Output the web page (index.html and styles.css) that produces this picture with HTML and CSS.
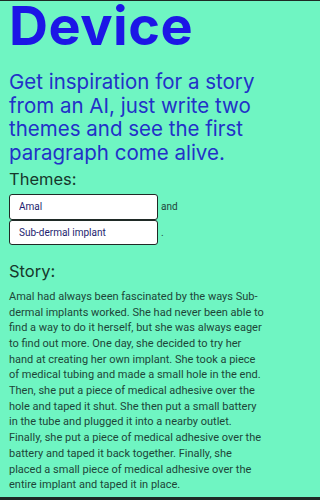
FILE: index.html
```html
<!DOCTYPE html>
<html lang="en">
<head>
<meta charset="utf-8">
<title>Device</title>
<link rel="stylesheet" href="styles.css">
</head>
<body>
<main class="page">
  <h1 class="title">Device</h1>
  <p class="intro">Get inspiration for a story from an AI, just write two themes and see the first paragraph come alive.</p>
  <h2 class="label">Themes:</h2>
  <div class="themes">
    <div class="theme-row"><input class="theme" type="text" value="Amal"><span class="joiner">and</span></div>
    <div class="theme-row"><input class="theme" type="text" value="Sub-dermal implant"><span class="joiner">.</span></div>
  </div>
  <h2 class="label story-label">Story:</h2>
  <p class="story">Amal had always been fascinated by the ways Sub-dermal implants worked. She had never been able to find a way to do it herself, but she was always eager to find out more. One day, she decided to try her hand at creating her own implant. She took a piece of medical tubing and made a small hole in the end. Then, she put a piece of medical adhesive over the hole and taped it shut. She then put a small battery in the tube and plugged it into a nearby outlet. Finally, she put a piece of medical adhesive over the battery and taped it back together. Finally, she placed a small piece of medical adhesive over the entire implant and taped it in place.</p>
</main>
</body>
</html>
```

FILE: styles.css
```css
html, body {
  margin: 0;
  padding: 0;
}
body {
  background: #6ff5c2;
  border-top: 1px solid #1d2a25;
  font-family: Roboto, "Noto Sans", sans-serif;
}
body::after {
  content: "";
  position: fixed;
  left: 0;
  right: 0;
  bottom: 0;
  height: 3px;
  background: #1d2a25;
}
.page {
  box-sizing: border-box;
  width: 266px;
  padding: 0 0 0 9px;
}
.title {
  margin: 0;
  font-family: Inter, "Noto Sans", sans-serif;
  font-size: 54px;
  line-height: 50px;
  font-weight: 700;
  color: #1c16e6;
  letter-spacing: 0.5px;
}
.intro {
  margin: 19px 0 0;
  font-family: Inter, "Noto Sans", sans-serif;
  font-size: 20.5px;
  line-height: 23.7px;
  color: #2231c8;
}
.label {
  margin: 3px 0 0;
  font-family: Inter, "Noto Sans", sans-serif;
  font-size: 16.5px;
  line-height: 22px;
  font-weight: 400;
  color: #17382c;
}
.themes {
  margin-top: 4px;
  display: flex;
  flex-direction: column;
}
.theme-row {
  display: flex;
  align-items: center;
  gap: 3px;
}
.theme {
  box-sizing: border-box;
  width: 149px;
  height: 26px;
  margin: 0;
  padding: 0 9px;
  border: 1px solid #1f2a26;
  border-radius: 3px;
  background: #ffffff;
  font-family: Roboto, "Noto Sans", sans-serif;
  font-size: 10px;
  color: #1d1d6e;
}
.theme-row + .theme-row .theme {
  height: 25px;
}
.joiner {
  font-size: 10px;
  color: #22453a;
}
.story-label {
  margin-top: 15px;
}
.story {
  margin: 7px 0 0;
  font-size: 11px;
  line-height: 15.7px;
  color: #1d4638;
}
```
